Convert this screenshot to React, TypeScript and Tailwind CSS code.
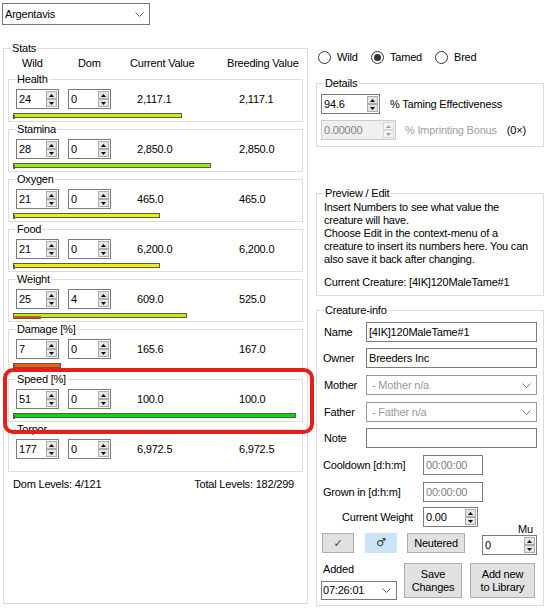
import React from "react";

type StatProps = {
  name: string;
  wild: string;
  dom: string;
  cur: string;
  breed: string;
  bar?: number;
  color?: string;
  domW?: number;
};

const stats: StatProps[] = [
  { name: "Health", wild: "24", dom: "0", cur: "2,117.1", breed: "2,117.1", bar: 169, color: "#c8f000" },
  { name: "Stamina", wild: "28", dom: "0", cur: "2,850.0", breed: "2,850.0", bar: 198, color: "#96f000" },
  { name: "Oxygen", wild: "21", dom: "0", cur: "465.0", breed: "465.0", bar: 147, color: "#f0f000" },
  { name: "Food", wild: "21", dom: "0", cur: "6,200.0", breed: "6,200.0", bar: 147, color: "#f0f000" },
  { name: "Weight", wild: "25", dom: "4", cur: "609.0", breed: "525.0", bar: 174, color: "#c0f000", domW: 28 },
  { name: "Damage [%]", wild: "7", dom: "0", cur: "165.6", breed: "167.0", bar: 48, color: "#ff5a00" },
  { name: "Speed [%]", wild: "51", dom: "0", cur: "100.0", breed: "100.0", bar: 283, color: "#00e000" },
  { name: "Torpor", wild: "177", dom: "0", cur: "6,972.5", breed: "6,972.5" },
];

function Group({
  label,
  className = "",
  children,
}: {
  label: string;
  className?: string;
  children?: React.ReactNode;
}) {
  return (
    <fieldset className={`border border-[#dcdcdc] ${className}`}>
      <legend className="ml-[7px] px-[1px] leading-[14px]">{label}</legend>
      {children}
    </fieldset>
  );
}

function Arrow({ up, disabled }: { up?: boolean; disabled?: boolean }) {
  return (
    <svg width="5" height="3" viewBox="0 0 5 3">
      <polygon
        points={up ? "0,3 2.5,0 5,3" : "0,0 2.5,3 5,0"}
        fill={disabled ? "#a0a0a0" : "#000"}
      />
    </svg>
  );
}

function Spin({
  value,
  className = "",
  disabled = false,
}: {
  value: string;
  className?: string;
  disabled?: boolean;
}) {
  return (
    <div
      className={`flex h-[20px] border ${
        disabled ? "border-[#cccccc] bg-[#f0f0f0] text-[#838383]" : "border-[#7a7a7a] bg-white"
      } ${className}`}
    >
      <div className="flex-1 min-w-0 pl-[2px] leading-[18px] whitespace-nowrap overflow-hidden">{value}</div>
      <div className="flex flex-col py-[1px] mr-[1px]">
        <div
          className={`h-[8px] w-[11px] flex items-center justify-center border ${
            disabled ? "border-[#d8d8d8] bg-[#f4f4f4]" : "border-[#adadad] bg-[#e5e5e5]"
          }`}
        >
          <Arrow up disabled={disabled} />
        </div>
        <div
          className={`h-[8px] w-[11px] flex items-center justify-center border ${
            disabled ? "border-[#d8d8d8] bg-[#f4f4f4]" : "border-[#adadad] bg-[#e5e5e5]"
          }`}
        >
          <Arrow disabled={disabled} />
        </div>
      </div>
    </div>
  );
}

function Chevron({ color = "#606060" }: { color?: string }) {
  return (
    <svg width="9" height="5" viewBox="0 0 9 5">
      <polyline points="0.5,0.5 4.5,4.5 8.5,0.5" fill="none" stroke={color} strokeWidth="1" />
    </svg>
  );
}

function StatRow({ s }: { s: StatProps }) {
  return (
    <Group label={s.name} className="ml-[4px] w-[295px] pt-[3px] pb-[3px]">
      <div className="flex items-center h-[20px]">
        <Spin value={s.wild} className="ml-[7px] w-[43px]" />
        <Spin value={s.dom} className="ml-[9px] w-[43px]" />
        <span className="ml-[26px] w-[102px] whitespace-nowrap">{s.cur}</span>
        <span className="whitespace-nowrap">{s.breed}</span>
      </div>
      <div className="relative mt-[4px] ml-[4px] h-[5px]">
        {s.bar !== undefined && (
          <>
            <div
              className="h-[5px] border border-[#5a5a5a]"
              style={{ width: s.bar, backgroundColor: s.color }}
            />
            {s.domW ? (
              <div
                className="absolute left-0 top-[3px] h-[3px] bg-[#c85a2c] border-b border-[#7a4a3a]"
                style={{ width: s.domW }}
              />
            ) : (
              <div className="absolute left-0 top-[2px] h-[4px] w-[2px] bg-[#5a5a5a]" />
            )}
          </>
        )}
      </div>
    </Group>
  );
}

function Radio({ label, checked, className = "" }: { label: string; checked?: boolean; className?: string }) {
  return (
    <div className={`flex items-center ${className}`}>
      <div className="w-[13px] h-[13px] rounded-full border border-[#333333] bg-white flex items-center justify-center">
        {checked && <div className="w-[7px] h-[7px] rounded-full bg-[#333333]" />}
      </div>
      <span className="ml-[6px] leading-[14px]">{label}</span>
    </div>
  );
}

function TextBox({ value, className = "", muted }: { value: string; className?: string; muted?: boolean }) {
  return (
    <div
      className={`h-[20px] border border-[#7a7a7a] bg-white pl-[2px] leading-[18px] whitespace-nowrap ${
        muted ? "text-[#808080]" : ""
      } ${className}`}
    >
      {value}
    </div>
  );
}

function Combo({ value, className = "" }: { value: string; className?: string }) {
  return (
    <div
      className={`h-[20px] border border-[#999999] bg-white flex items-center justify-between pl-[5px] pr-[5px] text-[#9a9a9a] ${className}`}
    >
      <span className="leading-[18px]">{value}</span>
      <Chevron color="#707070" />
    </div>
  );
}

function Button({ children, className = "" }: { children: React.ReactNode; className?: string }) {
  return (
    <div
      className={`border border-[#adadad] bg-[#e1e1e1] flex flex-col items-center justify-center leading-[13px] text-center ${className}`}
    >
      {children}
    </div>
  );
}

export default function App() {
  return (
    <div className="relative w-[558px] h-[609px] overflow-hidden bg-white text-black text-[11px] tracking-[-0.2px] font-['Liberation_Sans',Arial,sans-serif] flex">
      {/* Left column */}
      <div className="pl-[2px] pt-[3px] flex flex-col">
        <div className="w-[148px] h-[22px] border border-[#7a7a7a] flex items-center justify-between pl-[2px] pr-[5px]">
          <span>Argentavis</span>
          <Chevron />
        </div>
        <Group label="Stats" className="mt-[16px] ml-[1px] w-[305px] h-[563px]">
          <div className="flex mt-[1px] leading-[14px]">
            <span className="w-[18px]" />
            <span className="w-[56px]">Wild</span>
            <span className="w-[52px]">Dom</span>
            <span className="w-[97px]">Current Value</span>
            <span>Breeding Value</span>
          </div>
          <div className="mt-[2px]">
            {stats.map((s) => (
              <StatRow key={s.name} s={s} />
            ))}
          </div>
          <div className="flex mt-[5px] leading-[14px] pl-[9px] pr-[13px]">
            <span>Dom Levels: 4/121</span>
            <span className="ml-auto">Total Levels: 182/299</span>
          </div>
        </Group>
      </div>

      {/* Right column */}
      <div className="ml-[8px] w-[228px] pt-[50px] flex flex-col">
        <div className="flex items-center h-[14px] pl-[2px]">
          <Radio label="Wild" className="w-[53px]" />
          <Radio label="Tamed" checked className="w-[64px]" />
          <Radio label="Bred" />
        </div>

        <Group label="Details" className="mt-[12px] pb-[6px]">
          <div className="flex items-center mt-[4px] pl-[4px]">
            <Spin value="94.6" className="w-[59px]" />
            <span className="ml-[10px]">% Taming Effectiveness</span>
          </div>
          <div className="flex items-center mt-[6px] pl-[4px]">
            <Spin value="0.00000" disabled className="w-[75px]" />
            <span className="ml-[9px] text-[#a0a0a0]">% Imprinting Bonus</span>
            <span className="ml-[10px]">(0×)</span>
          </div>
        </Group>

        <Group label="Preview / Edit" className="mt-[39px] pb-[6px]">
          <div className="pl-[7px] pt-[1px] leading-[13px] whitespace-nowrap">
            Insert Numbers to see what value the
            <br />
            creature will have.
            <br />
            Choose Edit in the context-menu of a
            <br />
            creature to insert its numbers here. You can
            <br />
            also save it back after changing.
          </div>
          <div className="pl-[7px] mt-[10px] leading-[13px] whitespace-nowrap">
            Current Creature: [4IK]120MaleTame#1
          </div>
        </Group>

        <Group label="Creature-info" className="mt-[7px] pb-[5px]">
          <div className="flex items-center mt-[5px]">
            <span className="w-[49px] pl-[7px]">Name</span>
            <TextBox value="[4IK]120MaleTame#1" className="w-[171px]" />
          </div>
          <div className="flex items-center mt-[6px]">
            <span className="w-[49px] pl-[6px]">Owner</span>
            <TextBox value="Breeders Inc" className="w-[171px]" />
          </div>
          <div className="flex items-center mt-[7px]">
            <span className="w-[49px] pl-[7px]">Mother</span>
            <Combo value="- Mother n/a" className="w-[171px]" />
          </div>
          <div className="flex items-center mt-[7px]">
            <span className="w-[49px] pl-[7px]">Father</span>
            <Combo value="- Father n/a" className="w-[171px]" />
          </div>
          <div className="flex items-center mt-[6px]">
            <span className="w-[49px] pl-[7px]">Note</span>
            <TextBox value="" className="w-[171px]" />
          </div>
          <div className="flex items-center mt-[7px]">
            <span className="w-[106px] pl-[6px]">Cooldown [d:h:m]</span>
            <TextBox value="00:00:00" muted className="w-[60px] h-[19px] leading-[17px]" />
          </div>
          <div className="flex items-center mt-[7px]">
            <span className="w-[106px] pl-[6px]">Grown in [d:h:m]</span>
            <TextBox value="00:00:00" muted className="w-[60px] h-[19px] leading-[17px]" />
          </div>
          <div className="flex items-center mt-[5px] h-[20px]">
            <span className="w-[106px] pl-[25px]">Current Weight</span>
            <Spin value="0.00" className="w-[55px]" />
            <span className="ml-[40px] self-end mb-[-9px] leading-[13px]">Mu</span>
          </div>
          <div className="flex items-start mt-[6px]">
            <Button className="ml-[5px] w-[32px] h-[20px] text-[#444]">
              <span className="text-[11px] font-['DejaVu_Sans',sans-serif]">✓</span>
            </Button>
            <div className="ml-[11px] w-[32px] h-[20px] bg-[#cce4f7] border border-[#cce4f7] flex items-center justify-center text-[#333] text-[11px] font-['DejaVu_Sans',sans-serif]">
              ♂
            </div>
            <Button className="ml-[10px] w-[58px] h-[20px]">Neutered</Button>
            <Spin value="0" className="ml-[17px] mt-[2px] w-[55px]" />
          </div>
          <div className="flex items-start mt-[8px]">
            <div className="flex flex-col ml-[4px] w-[76px]">
              <span className="pl-[2px] leading-[13px]">Added</span>
              <div className="mt-[5px] h-[19px] border border-[#7a7a7a] flex items-center justify-between pl-[1px] pr-[5px]">
                <span>07:26:01</span>
                <Chevron />
              </div>
            </div>
            <Button className="ml-[7px] w-[58px] h-[35px]">
              <span>Save</span>
              <span>Changes</span>
            </Button>
            <Button className="ml-[8px] w-[65px] h-[35px]">
              <span>Add new</span>
              <span>to Library</span>
            </Button>
          </div>
        </Group>
      </div>

      {/* Highlight annotation over the Speed row */}
      <div className="absolute left-[3px] top-[368px] w-[311px] h-[66px] border-[4px] border-[#e5201b] rounded-[10px] pointer-events-none" />
    </div>
  );
}
